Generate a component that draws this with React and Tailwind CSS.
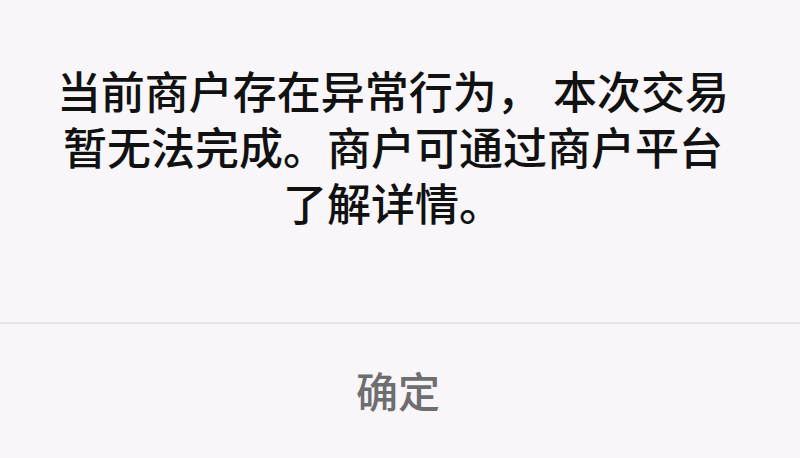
export default function App() {
  const lines = [
    "当前商户存在异常行为， 本次交易",
    "暂无法完成。商户可通过商户平台",
    "了解详情。",
  ];

  return (
    <div
      className="w-full h-[458px] bg-[#f8f6f9] flex flex-col"
      style={{ fontFamily: '"Liberation Sans", "Noto Sans CJK SC", sans-serif' }}
    >
      {/* message */}
      <div className="h-[322px] flex flex-col items-center pt-[66px] pr-[14px] text-[44px] leading-[56px] text-[#111111] font-medium">
        {lines.map((line) => (
          <p key={line} className="whitespace-pre">
            {line}
          </p>
        ))}
      </div>

      {/* action */}
      <div className="border-t-2 border-[#e6e4e8] flex-1 flex items-start justify-center pt-[42px] pr-[4px]">
        <button type="button" className="text-[42px] leading-[56px] text-[#6e6e6e] font-medium">
          确定
        </button>
      </div>
    </div>
  );
}
